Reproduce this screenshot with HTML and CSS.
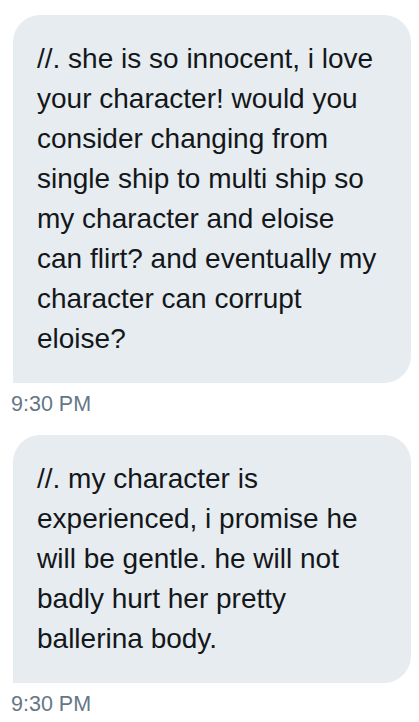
FILE: index.html
```html
<!DOCTYPE html>
<html lang="en">
<head>
<meta charset="utf-8">
<title>Messages</title>
<link rel="stylesheet" href="styles.css">
</head>
<body>
<main class="thread">
  <div class="message">
    <div class="bubble">//. she is so innocent, i love your character! would you consider changing from single ship to multi ship so my character and eloise can flirt? and eventually my character can corrupt eloise?</div>
    <div class="time">9:30 PM</div>
  </div>
  <div class="message">
    <div class="bubble">//. my character is experienced, i promise he will be gentle. he will not badly hurt her pretty ballerina body.</div>
    <div class="time">9:30 PM</div>
  </div>
</main>
</body>
</html>
```
FILE: styles.css
```css
html, body {
  margin: 0;
  padding: 0;
  background: #ffffff;
}

body {
  font-family: "Liberation Sans", Arial, Helvetica, sans-serif;
  width: 419px;
  height: 722px;
  overflow: hidden;
}

.thread {
  display: flex;
  flex-direction: column;
  padding: 15px 8px 0 13px;
}

.message {
  display: flex;
  flex-direction: column;
}

.bubble {
  background: #e6ecf0;
  color: #14171a;
  font-size: 28px;
  line-height: 40px;
  padding: 24px 24px 24px 24px;
  border-radius: 27px 27px 27px 0;
}

.time {
  color: #657786;
  font-size: 21.5px;
  line-height: 26px;
  margin: 8px 0 18px -2px;
}
```
